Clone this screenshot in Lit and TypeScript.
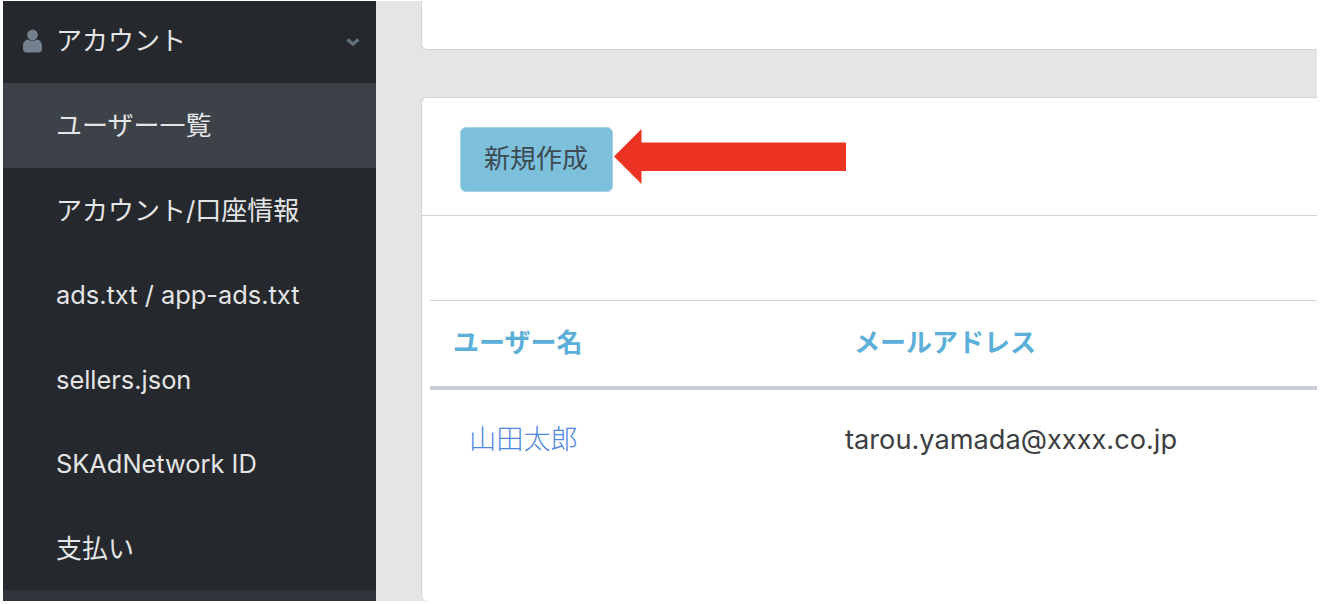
import { LitElement, html, css } from "lit";
import { customElement } from "lit/decorators.js";

const MENU = [
  { label: "ユーザー一覧", latin: false },
  { label: "アカウント/口座情報", latin: false },
  { label: "ads.txt / app-ads.txt", latin: true },
  { label: "sellers.json", latin: true },
  { label: "SKAdNetwork ID", latin: true },
  { label: "支払い", latin: false },
];

@customElement("app-root")
export class AppRoot extends LitElement {
  static styles = css`
    :host {
      display: block;
      height: 604px;
      box-sizing: border-box;
      padding: 1px 3px 3px;
      background: #fff;
      overflow: hidden;
      font-family: Inter, "Noto Sans CJK JP", sans-serif;
      font-size: 26px;
      line-height: 36px;
    }

    .frame {
      display: flex;
      height: 600px;
      background: #e4e5e6;
    }

    .sidebar {
      width: 373px;
      flex: none;
      display: flex;
      flex-direction: column;
      background: #25282c;
      color: #e4e5e6;
    }

    .item {
      height: 84.5px;
      flex: none;
      display: flex;
      align-items: center;
      padding: 2px 0 0 53px;
      box-sizing: border-box;
    }

    .item.latin {
      font-size: 25.4px;
    }

    .item.head {
      height: 82px;
      padding: 0 16px 2px 20px;
    }

    .item.active {
      background: #3d4148;
    }

    .person {
      width: 19px;
      height: 24px;
      margin-right: 14px;
      flex: none;
    }

    .chevron {
      width: 14px;
      height: 8px;
      margin: 1px 0 0 auto;
      flex: none;
    }

    .foot {
      margin-top: auto;
      height: 11px;
      background: #2f353a;
    }

    .main {
      flex: 1;
      min-width: 0;
      padding-left: 45px;
      display: flex;
      flex-direction: column;
      gap: 47px;
    }

    .card {
      background: #fff;
      border: 1px solid #cfd4d9;
      border-right: none;
    }

    .card.top {
      height: 49px;
      border-top: none;
      border-radius: 0 0 0 6px;
      box-sizing: border-box;
    }

    .card.users {
      flex: 1;
      min-height: 0;
      border-bottom: none;
      border-radius: 6px 0 0 6px;
    }

    .card-header {
      height: 118px;
      box-sizing: border-box;
      padding-left: 37.5px;
      padding-top: 29px;
      border-bottom: 1px solid #cfd4d9;
      display: flex;
      align-items: flex-start;
      gap: 1.5px;
    }

    .btn {
      width: 153px;
      height: 65px;
      box-sizing: border-box;
      padding-bottom: 2px;
      display: flex;
      align-items: center;
      justify-content: center;
      background: #7cc0dc;
      border: 1px solid #a5d4e7;
      border-radius: 6px;
      color: #3d4a52;
    }

    .arrow {
      width: 232px;
      height: 55px;
      margin-top: 2px;
      flex: none;
    }

    .card-body {
      padding: 84px 0 0 8px;
    }

    table {
      width: 100%;
      border-collapse: collapse;
      table-layout: fixed;
    }

    th {
      height: 83px;
      padding: 0 0 2px 23px;
      text-align: left;
      font-weight: 700;
      color: #5bafd8;
      border-top: 1px solid #cfd4d9;
      border-bottom: 4px solid #c8ced3;
    }

    th:first-child {
      width: 378px;
    }

    td {
      height: 100px;
      padding: 0 0 2px;
      font-size: 27.2px;
      color: #3c3e41;
    }

    td.name {
      padding-left: 39px;
      color: #4f86e0;
      font-weight: 300;
    }

    td.mail {
      padding-left: 14px;
    }
  `;

  render() {
    return html`
      <div class="frame">
        <nav class="sidebar">
          <div class="item head">
            <svg class="person" viewBox="0 0 19 24" fill="#73818f">
              <circle cx="9.500" cy="6" r="5.400" />
              <path d="M0 17c0-3.500 2-6 5-6.500 1.300.8 2.900 1.200 4.500 1.200s3.200-.4 4.500-1.200c3 .5 5 3 5 6.500v3c0 2.500-1.500 3.500-4 3.500H4c-2.500 0-4-1-4-3.500z" />
            </svg>
            <span>アカウント</span>
            <svg class="chevron" viewBox="0 0 14 8" fill="none" stroke="#64727e" stroke-width="3.400">
              <path d="M1.500 1.500 7 6l5.500-4.500" />
            </svg>
          </div>
          ${MENU.map(
            (m, i) =>
              html`<div class="item ${i === 0 ? "active" : ""} ${m.latin ? "latin" : ""}">${m.label}</div>`
          )}
          <div class="foot"></div>
        </nav>
        <div class="main">
          <section class="card top"></section>
          <section class="card users">
            <div class="card-header">
              <div class="btn">新規作成</div>
              <svg class="arrow" viewBox="0 0 232 55" fill="#ec3323">
                <path d="M0 27.500 27.500 0v13.500H232v28.500H27.500V55z" />
              </svg>
            </div>
            <div class="card-body">
              <table>
                <thead>
                  <tr>
                    <th>ユーザー名</th>
                    <th>メールアドレス</th>
                  </tr>
                </thead>
                <tbody>
                  <tr>
                    <td class="name">山田太郎</td>
                    <td class="mail">tarou.yamada@xxxx.co.jp</td>
                  </tr>
                </tbody>
              </table>
            </div>
          </section>
        </div>
      </div>
    `;
  }
}
